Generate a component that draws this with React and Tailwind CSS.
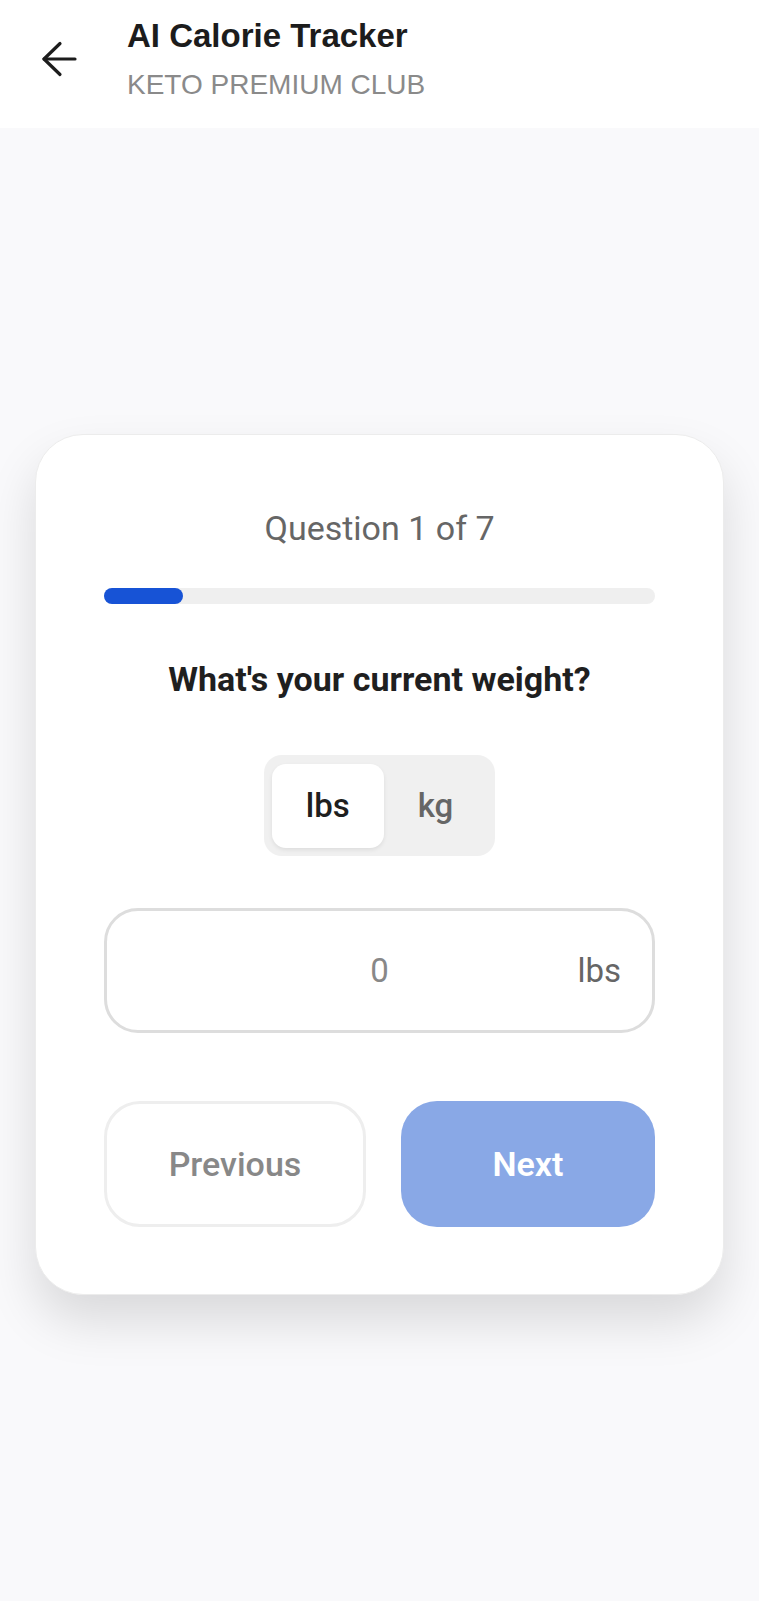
import React, { useState } from "react";

function BackArrow() {
  return (
    <svg width="36" height="36" viewBox="0 0 36 36" fill="none" stroke="#1c1c1c" strokeWidth="3.2" strokeLinecap="round" strokeLinejoin="round">
      <path d="M34 18H3" />
      <path d="M19 2.5 3 18l16 15.5" />
    </svg>
  );
}

export default function App() {
  const [unit, setUnit] = useState("lbs");
  const step = 1;
  const total = 7;

  return (
    <div className="flex min-h-screen flex-col bg-[#f9f9fb] font-['Roboto',sans-serif]">
      <header className="flex items-start bg-white pl-[41px] pt-[16px] pb-[26px]">
        <button className="mt-[25px] shrink-0">
          <BackArrow />
        </button>
        <div className="ml-[50px] font-['Liberation_Sans',Arial,sans-serif]">
          <h1 className="text-[33px] leading-[39px] font-bold text-[#1c1c1c]">AI Calorie Tracker</h1>
          <p className="mt-[12px] text-[28px] leading-[35px] text-[#8a8a8a]">KETO PREMIUM CLUB</p>
        </div>
      </header>

      <main className="flex flex-1 items-center justify-center px-[35px]">
        <div className="w-full rounded-[48px] border border-[#ececec] bg-white px-[68px] pt-[73px] pb-[67px] shadow-[0_26px_50px_rgba(0,0,0,0.13)]">
          <p className="text-center text-[34px] leading-[40px] text-[#666666]">
            Question {step} of {total}
          </p>

          <div className="mt-[40px] h-[16px] w-full rounded-full bg-[#efefef]">
            <div className="h-full rounded-full bg-[#1753d6]" style={{ width: `${(step / total) * 100}%` }} />
          </div>

          <h2 className="mt-[55px] text-center text-[34px] leading-[40px] font-bold text-[#1f1f1f]">
            What's your current weight?
          </h2>

          <div className="mt-[56px] flex justify-center">
            <div className="flex rounded-[18px] bg-[#f0f0f0] p-[8px] pt-[9px]">
              {["lbs", "kg"].map((u) => (
                <button
                  key={u}
                  onClick={() => setUnit(u)}
                  className={
                    unit === u
                      ? "h-[84px] rounded-[14px] bg-white px-[34px] text-[33px] font-medium text-[#1f1f1f] shadow-[0_2px_4px_rgba(0,0,0,0.08)]"
                      : "h-[84px] rounded-[14px] px-[34px] text-[33px] font-medium text-[#666666]"
                  }
                >
                  {u}
                </button>
              ))}
            </div>
          </div>

          <div className="relative mt-[52px] flex h-[125px] items-center rounded-[34px] border-[3px] border-[#dddddd] bg-white">
            <input
              type="text"
              inputMode="decimal"
              placeholder="0"
              className="w-full bg-transparent text-center text-[33px] text-[#333] outline-none placeholder:text-[#888888]"
            />
            <span className="absolute right-[31px] text-[33px] text-[#666666]">{unit}</span>
          </div>

          <div className="mt-[68px] flex gap-[35px]">
            <button className="h-[126px] w-[262px] rounded-[36px] border-[3px] border-[#eeeeee] bg-white text-[34px] font-medium text-[#888888]">
              Previous
            </button>
            <button className="h-[126px] flex-1 rounded-[36px] bg-[#89a8e6] text-[34px] font-semibold text-white">
              Next
            </button>
          </div>
        </div>
      </main>
    </div>
  );
}
